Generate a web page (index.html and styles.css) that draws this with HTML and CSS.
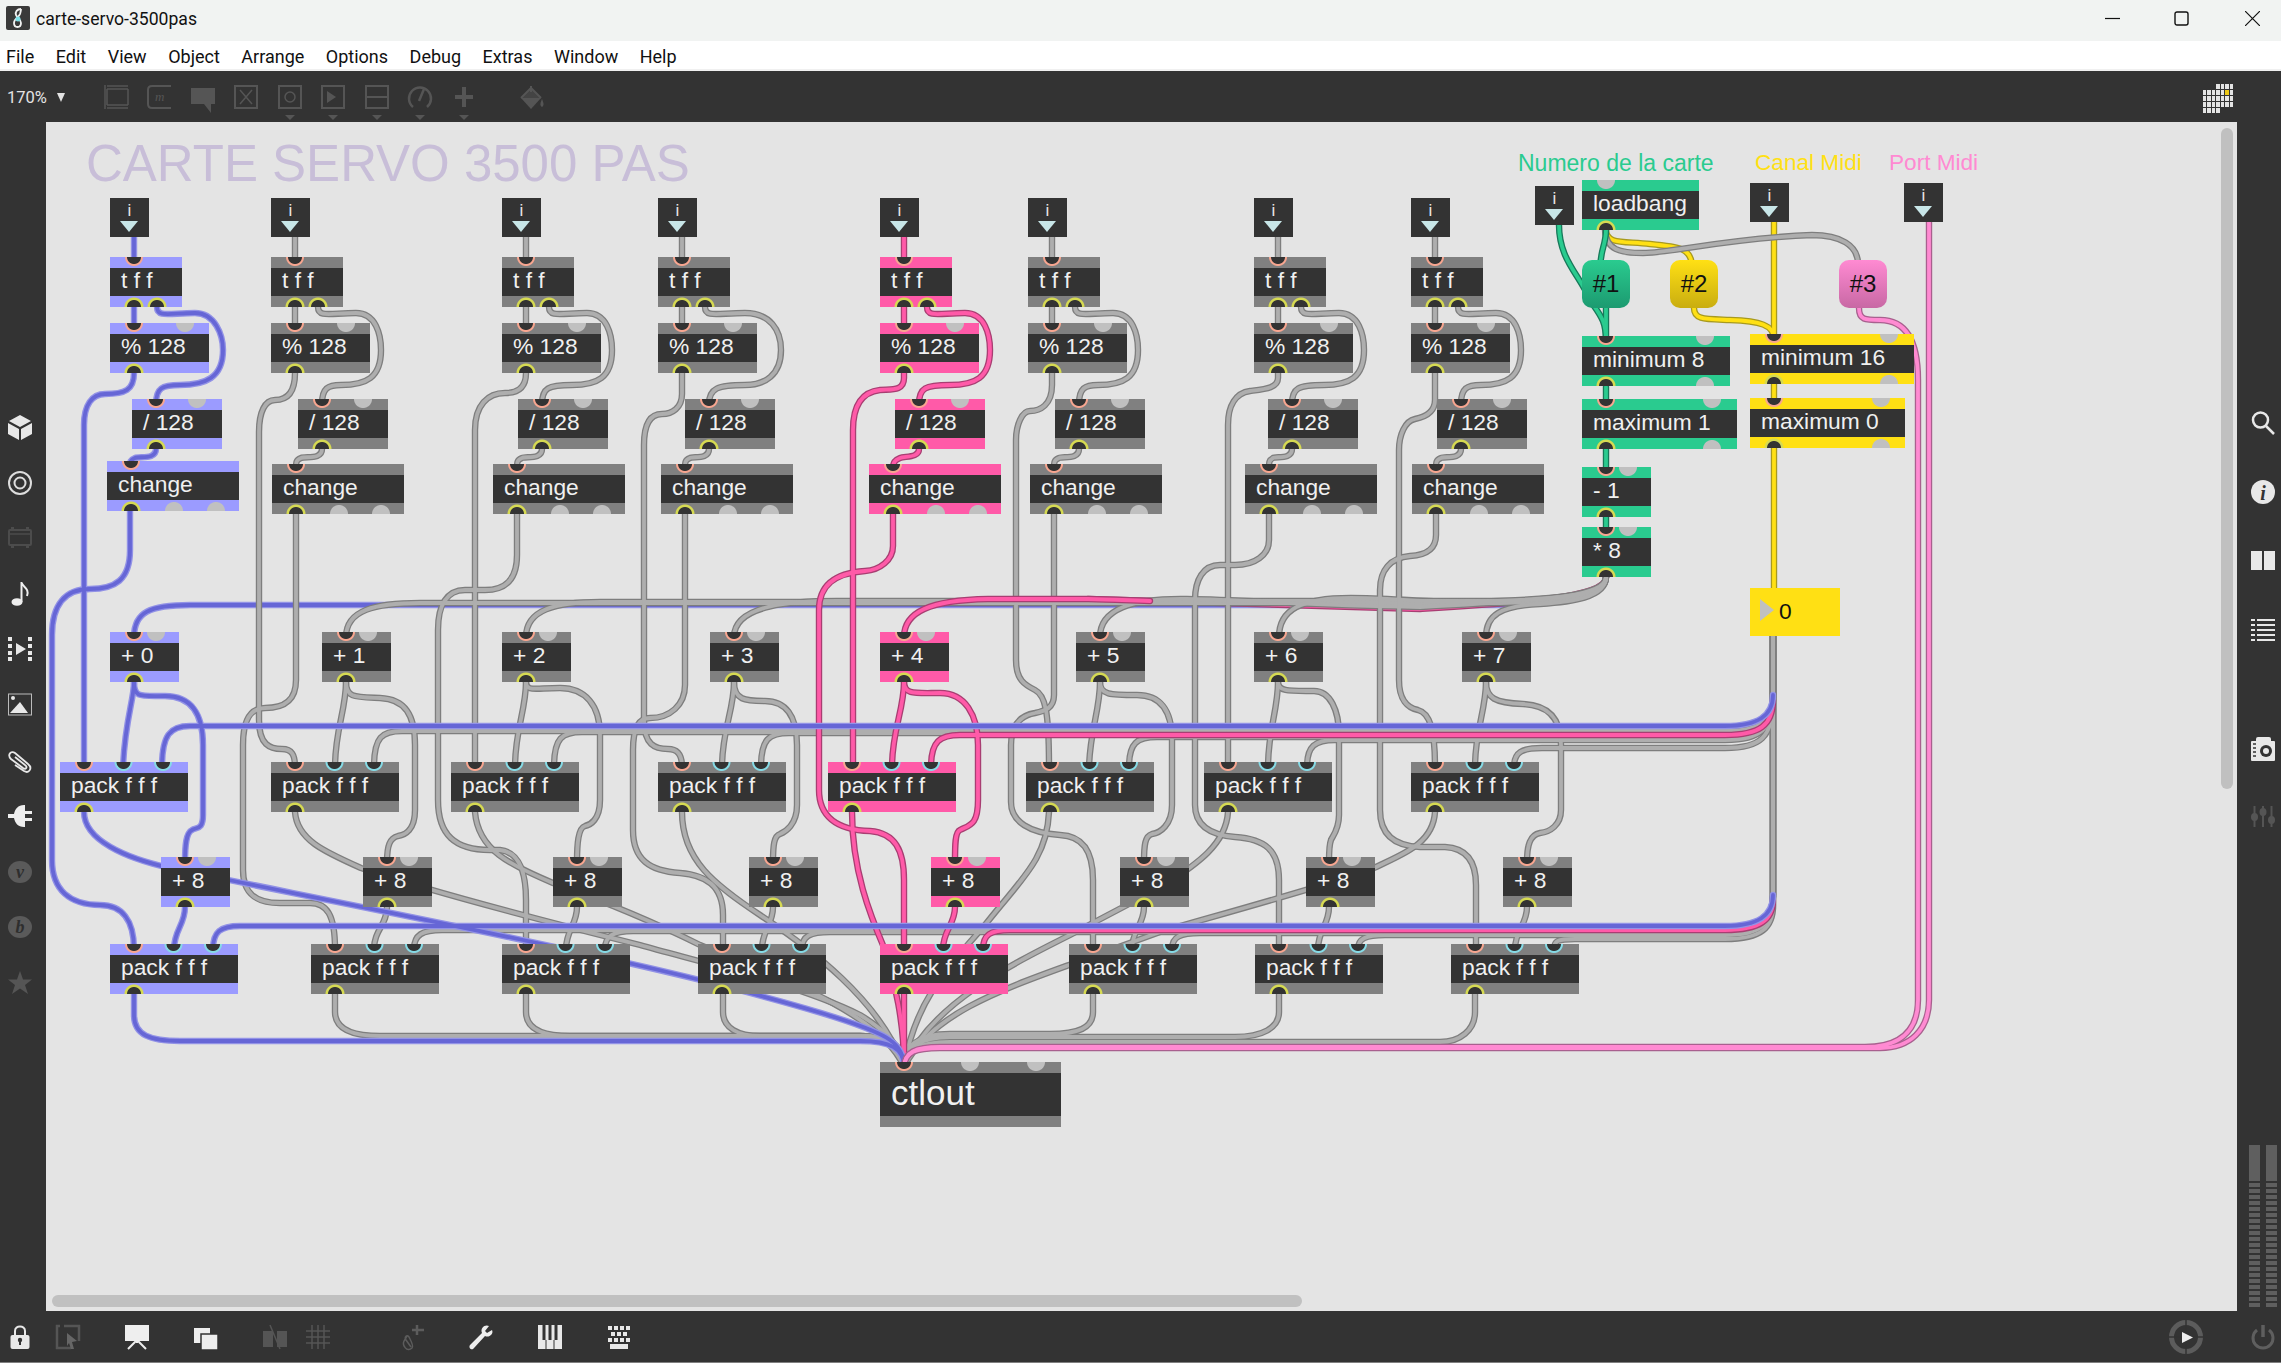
FILE: index.html
```html
<!DOCTYPE html>
<html lang="en">
<head>
<meta charset="utf-8">
<title>carte-servo-3500pas</title>
<link rel="stylesheet" href="styles.css">
</head>
<body>
<header class="titlebar">
  <svg class="appicon" viewBox="0 0 24 24"><rect width="24" height="24" rx="2" fill="#3a3a3a"/><path d="M15 3C11 3 9 6 10 9c1 3 5 4 5 8 0 3-2 4-3.500 4S8 20 8 17c0-4 5-6 6-9 .6-2 1-3 1-5" fill="none" stroke="#f2f2f2" stroke-width="1.800"/><circle cx="12" cy="13" r="2.500" fill="#7fe0e8"/></svg>
  <span class="doc">carte-servo-3500pas</span>
  <div class="winbtns">
    <svg viewBox="0 0 15 15"><path d="M0 7.500H15" stroke="#111" stroke-width="1.200"/></svg>
    <svg viewBox="0 0 15 15"><rect x="1" y="1" width="13" height="13" rx="2" fill="none" stroke="#111" stroke-width="1.400"/></svg>
    <svg viewBox="0 0 15 15"><path d="M0 0L15 15M15 0L0 15" stroke="#111" stroke-width="1.200"/></svg>
  </div>
</header>
<nav class="menubar"><span>File</span><span>Edit</span><span>View</span><span>Object</span><span>Arrange</span><span>Options</span><span>Debug</span><span>Extras</span><span>Window</span><span>Help</span></nav>
<div class="toolbar">
  <span class="zoomval">170%</span><span class="zoomarrow"></span>
  <div class="tools">
    <svg viewBox="0 0 24 34"><path d="M1 0V24M3 1H24M3 4H24M3 20H24M3 23H24M3 4V20M24 4V20" fill="none" stroke="#555" stroke-width="1.500"/></svg>
    <svg viewBox="0 0 24 34"><path d="M24 1H5Q1 1 1 5V19Q1 23 5 23H24" fill="none" stroke="#555" stroke-width="2"/><text x="8" y="16" class="m">m</text></svg>
    <svg viewBox="0 0 24 34"><path d="M0 3H24V19H20L20 28L13 19H0Z" fill="#555"/></svg>
    <svg viewBox="0 0 24 34"><rect x="1" y="1" width="22" height="22" fill="none" stroke="#555" stroke-width="2"/><path d="M6 5L18 19M18 5L6 19" stroke="#555" stroke-width="1.500"/></svg>
    <svg viewBox="0 0 24 34"><rect x="1" y="1" width="22" height="22" fill="none" stroke="#555" stroke-width="2"/><circle cx="12" cy="12" r="5" fill="none" stroke="#555" stroke-width="1.500"/><path d="M7 30H17L12 35Z" fill="#555"/></svg>
    <svg viewBox="0 0 24 34"><rect x="1" y="1" width="22" height="22" fill="none" stroke="#555" stroke-width="2"/><path d="M6 6L15 12L6 18Z" fill="#555"/><path d="M7 30H17L12 35Z" fill="#555"/></svg>
    <svg viewBox="0 0 24 34"><rect x="1" y="1" width="22" height="22" fill="none" stroke="#555" stroke-width="2"/><path d="M1 12H23" stroke="#555" stroke-width="2"/><path d="M7 30H17L12 35Z" fill="#555"/></svg>
    <svg viewBox="0 0 24 34"><path d="M5 22A11 11 0 1 1 19 22" fill="none" stroke="#555" stroke-width="2.500"/><path d="M11 16L16 4" stroke="#555" stroke-width="2.500"/><path d="M7 30H17L12 35Z" fill="#555"/></svg>
    <svg viewBox="0 0 24 34"><path d="M12 2V22M3 12H21" stroke="#555" stroke-width="4"/><path d="M7 30H17L12 35Z" fill="#555"/></svg>
    <svg class="bucket" viewBox="0 0 24 34"><path d="M1 13H21L11 24Z" fill="#555"/><path d="M1 13L11 3L21 13" fill="#444" stroke="#555" stroke-width="2"/><path d="M11 1V7" stroke="#555" stroke-width="2"/><path d="M22 14C23 17 25 20 22 22C19 20 21 17 22 14Z" fill="#555"/></svg>
  </div>
  <svg class="gridmap" viewBox="0 0 30 29">
    <path class="cell" d="M13 0h4v5h-4zM18 0h3v5h-3zM22 0h4v5h-4zM27 0h3v5h-3zM0 6h3v5H0zM4 6h4v5H4zM9 6h3v5H9zM13 6h4v5h-4zM18 6h3v5h-3zM27 6h3v5h-3zM0 12h3v5H0zM4 12h4v5H4zM9 12h3v5H9zM13 12h4v5h-4zM18 12h3v5h-3zM22 12h4v5h-4zM27 12h3v5h-3zM0 18h3v5H0zM4 18h4v5H4zM9 18h3v5H9zM13 18h4v5h-4zM18 18h3v5h-3zM22 18h4v5h-4zM27 18h3v5h-3zM0 24h3v5H0zM4 24h4v5H4zM9 24h3v5H9zM13 24h4v5h-4z"/>
    <path d="M22 6h4v5h-4z" fill="#ecc815"/>
  </svg>
</div>
<main class="workspace">
  <aside class="rail left">
    <svg viewBox="0 0 24 24"><path d="M12 0L23 6L12 12L1 6Z M0 8L11 14V25L0 19Z M24 8L13 14V25L24 19Z" fill="#e8e8e8"/></svg>
    <svg viewBox="0 0 24 24"><circle cx="12" cy="12" r="11" fill="none" stroke="#ddd" stroke-width="2"/><circle cx="12" cy="12" r="5.500" fill="none" stroke="#ddd" stroke-width="2"/></svg>
    <svg viewBox="0 0 24 24"><rect x="1" y="4" width="22" height="15" rx="1" fill="none" stroke="#4c4c4c" stroke-width="2"/><path d="M1 8H23" stroke="#4c4c4c" stroke-width="1.500"/><path d="M3 2H6M18 2H21M3 21H6M18 21H21" stroke="#4c4c4c" stroke-width="2"/></svg>
    <svg viewBox="0 0 24 24"><ellipse cx="9" cy="20" rx="5.500" ry="3.800" fill="#eee"/><path d="M13.500 20V0C14 5 22 6 19 14" fill="none" stroke="#eee" stroke-width="2"/></svg>
    <svg viewBox="0 0 24 24"><path d="M0 0h4v4H0zM0 7h4v4H0zM0 14h4v4H0zM0 20h4v4H0zM20 0h4v4h-4zM20 7h4v4h-4zM20 14h4v4h-4zM20 20h4v4h-4zM8 6L18 12L8 18Z" fill="#e8e8e8"/></svg>
    <svg viewBox="0 0 24 24"><rect x=".5" y="1" width="23" height="21" fill="none" stroke="#bbb"/><circle cx="5" cy="5" r="2" fill="#e8e8e8"/><path d="M2 20L12 9L20 20Z" fill="#e8e8e8"/></svg>
    <svg viewBox="0 0 24 24"><path d="M7 16L16 22C21 25 25 19 20 15L7 4C3 1 -1 6 3 10L15 19C18 21 20 18 17 16L7 8" fill="none" stroke="#e8e8e8" stroke-width="1.800"/></svg>
    <svg viewBox="0 0 24 24"><path d="M0 10H6C7 5 10 1 16 1H17V7H24V10H17V14H24V17H17V23H16C10 23 7 19 6 14H0Z" fill="#eee"/></svg>
    <svg viewBox="0 0 24 24"><ellipse cx="12" cy="12" rx="12" ry="11" fill="#5a5a5a"/><text x="12" y="18" class="badge">v</text></svg>
    <svg viewBox="0 0 24 24"><ellipse cx="12" cy="12" rx="12" ry="11" fill="#5a5a5a"/><text x="12" y="18" class="badge">b</text></svg>
    <svg viewBox="0 0 24 24"><path d="M12 0L15 8.500H24L17 14L20 23L12 17.500L4 23L7 14L0 8.500H9Z" fill="#555"/></svg>
  </aside>
  <section class="canvas">
    <div class="sheet">
      <svg class="cords" viewBox="0 0 2281 1363">
        <defs>
          <g id="c-under">
            <path d="M1606 577C1606 595 1575 600 1500 605H190C150 605 134 612 134 637"/>
          </g>
          <g id="c-pink-under">
            <path d="M1606 577C1606 598 1520 603 1420 609C1300 606 1187 603 1088 599"/>
          </g>
          <g id="c-gray">
            <path d="M1773 636V695C1773 721 1760 731 1725 731H402C382 731 374 737 374 767"/>
            <path d="M1773 636V695C1773 722 1760 732 1725 732H582C562 732 554 738 554 767"/>
            <path d="M1773 636V695C1773 723 1760 733 1725 733H789C769 733 761 739 761 767"/>
            <path d="M1773 636V695C1773 727 1760 737 1725 737H1157C1137 737 1129 743 1129 767"/>
            <path d="M1773 636V695C1773 730 1760 740 1725 740H1335C1315 740 1307 746 1307 767"/>
            <path d="M1773 636V700C1773 738 1760 748 1725 748H1542C1522 748 1514 752 1514 767"/>
            <path d="M1773 636V895C1773 920 1760 930 1725 930H442C422 930 414 935 414 949"/>
            <path d="M1773 636V895C1773 921 1760 931 1725 931H633C613 931 605 936 605 949"/>
            <path d="M1773 636V895C1773 922 1760 932 1725 932H830C810 932 802 936 802 949"/>
            <path d="M1773 636V895C1773 923 1760 933 1725 933H1200C1180 933 1172 937 1172 949"/>
            <path d="M1773 636V895C1773 925 1760 935 1725 935H1385C1365 935 1358 939 1358 949"/>
            <path d="M1773 636V900C1775 929 1760 939 1725 939H1575C1557 939 1554 941 1554 949"/>

            <path d="M1606 577C1606 595 1575 601 1500 603H420C375 603 346 610 346 637"/>
            <path d="M1606 577C1606 595 1575 601 1500 602H600C555 602 526 610 526 637"/>
            <path d="M1606 577C1606 595 1575 601 1500 601H849C790 600 734 605 734 637"/>
            <path d="M1606 577C1606 595 1560 600 1420 607C1300 605 1250 600 1187 599C1130 598 1100 610 1100 637"/>
            <path d="M1606 577C1606 595 1570 600 1449 602C1400 600 1380 598 1351 598C1300 598 1279 610 1279 637"/>
            <path d="M1606 577C1606 598 1570 602 1540 604C1500 606 1486 615 1486 637"/>

            <path d="M295 237V262M295 307V328"/>
            <path d="M318 307C318 318 331 313 356 313C376 313 381 335 381 350C381 378 366 385 341 385C328 385 322 388 322 404"/>
            <path d="M295 373C295 395 285 400 275 400C265 400 259 412 259 432V720C259 745 270 749 282 749C292 749 295 755 295 767"/>
            <path d="M322 449C322 460 306 456 301 458C296 460 296 462 296 469"/>
            <path d="M296 514V680C296 700 285 708 265 708C250 708 243 720 243 745V870C243 893 255 903 280 903H310C327 903 335 915 335 949"/>
            <path d="M346 682C346 710 335 730 335 767"/>
            <path d="M346 682C346 698 355 697 380 698C405 699 415 715 415 745V810C415 830 405 835 398 836C390 838 387 845 387 862"/>
            <path d="M387 907C387 925 374 930 374 949"/>
            <path d="M295 812C297 840 325 852 361 868C420 888 520 915 640 945C700 962 800 985 860 1015C885 1030 900 1045 904 1067"/>
            <path d="M335 994V1012C335 1028 350 1036 380 1036H860C888 1036 904 1045 904 1067"/>

            <path d="M526 237V262M526 307V328"/>
            <path d="M549 307C549 318 562 313 587 313C607 313 612 335 612 350C612 378 597 385 572 385C548 385 542 388 542 404"/>
            <path d="M526 373C526 390 515 393 505 393C488 393 475 405 475 430V767"/>
            <path d="M542 449C542 460 526 456 522 458C517 460 517 462 517 469"/>
            <path d="M517 514V555C517 580 505 590 485 590H465C447 590 438 605 438 630V800C438 835 455 850 490 850H500C520 852 526 875 526 900V949"/>
            <path d="M526 682C526 710 515 730 515 767"/>
            <path d="M526 682C526 692 535 688 560 688C585 688 600 705 600 735V800C600 820 590 825 585 826C578 828 577 845 577 862"/>
            <path d="M577 907C577 925 566 930 566 949"/>
            <path d="M475 812C478 850 510 865 553 883C600 900 660 925 700 945C760 970 880 1010 904 1067"/>
            <path d="M526 994V1012C526 1028 540 1036 570 1036H860C888 1036 904 1045 904 1067"/>

            <path d="M682 237V262M682 307V328"/>
            <path d="M705 307C705 318 718 313 745 313C770 313 781 330 781 350C781 375 765 385 745 385C718 385 709 388 709 404"/>
            <path d="M682 373V394C682 408 672 414 662 414C650 414 644 425 644 445V720C644 745 655 749 668 749C678 749 682 755 682 767"/>
            <path d="M709 449C709 460 693 456 690 458C685 460 685 462 685 469"/>
            <path d="M685 514V685C685 705 670 718 650 718C638 718 633 730 633 750V830C633 860 650 871 680 873C705 875 723 885 723 915V949"/>
            <path d="M734 682C734 710 722 730 722 767"/>
            <path d="M734 682C734 700 745 701 765 701C785 701 797 715 797 745V805C797 825 785 832 780 834C774 836 773 845 773 862"/>
            <path d="M773 907C773 925 762 930 762 949"/>
            <path d="M682 812C682 860 715 885 760 915C810 948 880 1000 904 1067"/>
            <path d="M723 994V1012C723 1028 738 1036 760 1036H860C888 1036 904 1045 904 1067"/>

            <path d="M1052 237V262M1052 307V328"/>
            <path d="M1075 307C1075 318 1088 313 1113 313C1133 313 1138 335 1138 350C1138 378 1123 385 1098 385C1085 385 1079 388 1079 404"/>
            <path d="M1052 373V385C1052 405 1040 411 1030 411C1022 411 1016 425 1016 440V660C1016 680 1025 685 1035 690C1045 695 1049 710 1049 767"/>
            <path d="M1079 449C1079 460 1063 456 1059 458C1054 460 1054 462 1054 469"/>
            <path d="M1054 514V695C1054 708 1045 711 1035 713C1018 716 1011 728 1011 745V802C1011 822 1030 833 1060 835C1082 836 1093 850 1093 880V949"/>
            <path d="M1100 682C1100 710 1090 730 1089 767"/>
            <path d="M1100 682C1100 695 1110 695 1137 695C1160 695 1172 710 1172 740V805C1172 825 1160 833 1152 834C1145 836 1144 845 1144 862"/>
            <path d="M1144 907C1144 925 1132 930 1132 949"/>
            <path d="M1049 812C1047 860 1020 880 985 925C950 965 915 1000 904 1067"/>
            <path d="M1093 994V1012C1093 1028 1078 1034 1050 1034H950C920 1034 904 1045 904 1067"/>

            <path d="M1278 237V262M1278 307V328"/>
            <path d="M1301 307C1301 318 1314 313 1339 313C1359 313 1364 335 1364 350C1364 378 1349 385 1324 385C1298 385 1292 388 1292 404"/>
            <path d="M1278 373V378C1278 388 1265 389 1250 391C1236 393 1228 405 1228 425V767"/>
            <path d="M1292 449C1292 460 1276 456 1273 458C1269 460 1269 462 1269 469"/>
            <path d="M1269 514V540C1269 555 1255 565 1235 565H1220C1203 565 1195 580 1195 600V805C1195 825 1210 835 1235 837C1265 839 1279 850 1279 880V949"/>
            <path d="M1278 682C1278 710 1268 730 1268 767"/>
            <path d="M1278 682C1278 692 1290 691 1314 691C1330 691 1339 710 1339 735V815C1339 830 1332 837 1331 840C1329 845 1329 850 1329 862"/>
            <path d="M1329 907C1329 925 1318 930 1318 949"/>
            <path d="M1228 812C1226 845 1195 865 1165 885L1070 935C1010 965 930 1005 904 1067"/>
            <path d="M1279 994V1012C1279 1028 1262 1037 1235 1037H950C920 1037 904 1048 904 1067"/>

            <path d="M1435 237V262M1435 307V328"/>
            <path d="M1458 307C1458 318 1471 313 1496 313C1516 313 1521 335 1521 350C1521 378 1506 385 1481 385C1467 385 1461 388 1461 404"/>
            <path d="M1435 373V400C1435 412 1425 417 1415 419C1405 421 1399 435 1399 450V680C1399 700 1408 708 1418 710C1430 713 1435 730 1435 767"/>
            <path d="M1461 449C1461 460 1445 456 1441 458C1436 460 1436 462 1436 469"/>
            <path d="M1436 514V535C1436 548 1428 555 1410 556C1390 558 1380 570 1380 590V810C1380 835 1395 846 1420 847H1445C1465 848 1476 860 1476 885V949"/>
            <path d="M1486 682C1486 710 1475 730 1475 767"/>
            <path d="M1486 682C1486 698 1495 703 1523 704C1545 705 1561 715 1561 745V810C1561 825 1550 832 1540 833C1530 835 1527 845 1527 862"/>
            <path d="M1527 907C1527 925 1515 930 1515 949"/>
            <path d="M1435 812C1433 845 1400 855 1374 868C1340 882 1200 920 1160 932L1069 965C1000 990 930 1015 904 1067"/>
            <path d="M1475 994V1012C1475 1030 1460 1042 1440 1042H950C920 1042 904 1050 904 1067"/>

            <path d="M1605 230C1606 250 1620 253 1643 253C1670 253 1730 238 1812 235C1840 235 1858 245 1858 264"/>
          </g>
          <g id="c-blue">
            <path d="M134 237V262M134 307V328"/>
            <path d="M157 307C157 318 170 313 195 313C215 313 223 335 223 350C223 378 205 385 180 385C162 385 156 388 156 404"/>
            <path d="M134 373C134 390 125 394 105 394C92 394 84 405 84 425V767"/>
            <path d="M156 449C156 460 140 456 135 458C130 460 130 462 130 466"/>
            <path d="M130 511V550C130 580 115 589 90 589C65 589 52 605 52 635V860C52 890 70 905 100 905C122 905 134 920 134 949"/>
            <path d="M134 682C134 700 125 720 123 767"/>
            <path d="M134 682C134 698 140 696 165 696C192 696 203 715 203 745V815C203 830 197 827 192 830C186 833 185 845 185 862"/>
            <path d="M84 812C84 840 125 858 170 868C300 895 560 945 700 980C790 1003 870 1025 890 1040C900 1047 904 1055 904 1067"/>
            <path d="M185 907C185 925 174 930 174 949"/>
            <path d="M134 994V1015C134 1035 150 1041 180 1041H860C890 1041 904 1048 904 1067"/>
            <path d="M1773 695C1773 716 1758 726 1725 726H190C170 726 162 735 162 767"/>
            <path d="M1773 895C1773 916 1758 926 1725 926H240C220 926 213 932 213 949"/>
          </g>
          <g id="c-pink">
            <path d="M904 237V262M904 307V328"/>
            <path d="M927 307C927 318 940 313 965 313C985 313 990 335 990 350C990 378 975 385 950 385C925 385 919 388 919 404"/>
            <path d="M904 373V378C904 392 890 389 880 390C862 392 853 405 853 430V767"/>
            <path d="M919 449C919 458 905 456 900 458C895 460 893 462 893 469"/>
            <path d="M893 514V546C893 560 880 570 865 571C835 573 819 585 819 610V790C819 815 835 830 870 831C895 833 904 850 904 880V949"/>
            <path d="M904 682C904 710 892 730 892 767"/>
            <path d="M904 682C904 695 915 693 940 693C965 693 978 715 978 745V800C978 825 970 825 960 830C955 832 955 845 955 862"/>
            <path d="M955 907C955 925 943 930 943 949"/>
            <path d="M852 812C852 870 870 915 885 950C895 985 904 1020 904 1067"/>
            <path d="M904 994V1067"/>
            <path d="M1150 601C1120 600 1100 599 1088 599H988C930 600 904 612 904 637"/>
            <path d="M1773 700C1773 725 1760 735 1725 735H960C940 735 931 741 931 767"/>
            <path d="M1773 900C1773 920 1760 930 1725 930H1010C990 930 983 935 983 949"/>
          </g>
          <g id="c-port">
            <path d="M1859 308C1859 320 1865 320 1880 320C1905 320 1918 340 1918 380V1000C1918 1035 1895 1047 1865 1047H940C915 1047 905 1052 904 1067"/>
            <path d="M1929 222V1000C1929 1030 1910 1048 1880 1048H940C915 1048 905 1052 904 1067"/>
          </g>
          <g id="c-green">
            <path d="M1559 225C1559 260 1580 275 1590 300C1600 315 1606 320 1606 341"/>
            <path d="M1606 230C1606 245 1600 250 1600 270"/>
            <path d="M1606 308V341M1606 387V404M1606 449V472M1606 517V532"/>
          </g>
          <g id="c-yellow">
            <path d="M1774 222V339"/>
            <path d="M1606 230C1606 245 1625 241 1650 244C1680 247 1690 248 1692 264"/>
            <path d="M1694 308C1694 320 1705 319 1730 320C1760 321 1774 325 1774 339"/>
            <path d="M1774 383V403M1774 448V590"/>
          </g>
        </defs>
        <use href="#c-yellow" class="edge e-yellow"/><use href="#c-yellow" class="core k-yellow"/>
        <use href="#c-under" class="edge e-blue"/><use href="#c-under" class="core k-blue"/>
        <use href="#c-pink-under" class="edge e-pink"/><use href="#c-pink-under" class="core k-pink"/>
        <use href="#c-gray" class="edge e-gray"/><use href="#c-gray" class="core k-gray"/>
        <use href="#c-green" class="edge e-green"/><use href="#c-green" class="core k-green"/>
        <use href="#c-pink" class="edge e-pink"/><use href="#c-pink" class="core k-pink"/>
        <use href="#c-blue" class="edge e-blue"/><use href="#c-blue" class="core k-blue"/>
        <use href="#c-port" class="edge e-port"/><use href="#c-port" class="core k-port"/>
      </svg>

      <h1 class="title">CARTE SERVO 3500 PAS</h1>
      <span class="label l-green">Numero de la carte</span>
      <span class="label l-yellow">Canal Midi</span>
      <span class="label l-pink">Port Midi</span>

      <div class="inl" style="left:110px;top:198px">i</div>
      <div class="inl" style="left:271px;top:198px">i</div>
      <div class="inl" style="left:502px;top:198px">i</div>
      <div class="inl" style="left:658px;top:198px">i</div>
      <div class="inl" style="left:880px;top:198px">i</div>
      <div class="inl" style="left:1028px;top:198px">i</div>
      <div class="inl" style="left:1254px;top:198px">i</div>
      <div class="inl" style="left:1411px;top:198px">i</div>
      <div class="inl" style="left:1535px;top:186px">i</div>
      <div class="inl" style="left:1750px;top:183px">i</div>
      <div class="inl" style="left:1904px;top:183px">i</div>

      <div class="obj tff blue" style="left:110px;top:257px">t f f</div>
      <div class="obj tff gray" style="left:271px;top:257px">t f f</div>
      <div class="obj tff gray" style="left:502px;top:257px">t f f</div>
      <div class="obj tff gray" style="left:658px;top:257px">t f f</div>
      <div class="obj tff pink" style="left:880px;top:257px">t f f</div>
      <div class="obj tff gray" style="left:1028px;top:257px">t f f</div>
      <div class="obj tff gray" style="left:1254px;top:257px">t f f</div>
      <div class="obj tff gray" style="left:1411px;top:257px">t f f</div>

      <div class="obj mod blue" style="left:110px;top:323px">% 128</div>
      <div class="obj mod gray" style="left:271px;top:323px">% 128</div>
      <div class="obj mod gray" style="left:502px;top:323px">% 128</div>
      <div class="obj mod gray" style="left:658px;top:323px">% 128</div>
      <div class="obj mod pink" style="left:880px;top:323px">% 128</div>
      <div class="obj mod gray" style="left:1028px;top:323px">% 128</div>
      <div class="obj mod gray" style="left:1254px;top:323px">% 128</div>
      <div class="obj mod gray" style="left:1411px;top:323px">% 128</div>

      <div class="obj dvd blue" style="left:132px;top:399px">/ 128</div>
      <div class="obj dvd gray" style="left:298px;top:399px">/ 128</div>
      <div class="obj dvd gray" style="left:518px;top:399px">/ 128</div>
      <div class="obj dvd gray" style="left:685px;top:399px">/ 128</div>
      <div class="obj dvd pink" style="left:895px;top:399px">/ 128</div>
      <div class="obj dvd gray" style="left:1055px;top:399px">/ 128</div>
      <div class="obj dvd gray" style="left:1268px;top:399px">/ 128</div>
      <div class="obj dvd gray" style="left:1437px;top:399px">/ 128</div>

      <div class="obj chg blue" style="left:107px;top:461px">change</div>
      <div class="obj chg gray" style="left:272px;top:464px">change</div>
      <div class="obj chg gray" style="left:493px;top:464px">change</div>
      <div class="obj chg gray" style="left:661px;top:464px">change</div>
      <div class="obj chg pink" style="left:869px;top:464px">change</div>
      <div class="obj chg gray" style="left:1030px;top:464px">change</div>
      <div class="obj chg gray" style="left:1245px;top:464px">change</div>
      <div class="obj chg gray" style="left:1412px;top:464px">change</div>

      <div class="obj add blue" style="left:110px;top:632px">+ 0</div>
      <div class="obj add gray" style="left:322px;top:632px">+ 1</div>
      <div class="obj add gray" style="left:502px;top:632px">+ 2</div>
      <div class="obj add gray" style="left:710px;top:632px">+ 3</div>
      <div class="obj add pink" style="left:880px;top:632px">+ 4</div>
      <div class="obj add gray" style="left:1076px;top:632px">+ 5</div>
      <div class="obj add gray" style="left:1254px;top:632px">+ 6</div>
      <div class="obj add gray" style="left:1462px;top:632px">+ 7</div>

      <div class="obj pack blue" style="left:60px;top:762px">pack f f f</div>
      <div class="obj pack gray" style="left:271px;top:762px">pack f f f</div>
      <div class="obj pack gray" style="left:451px;top:762px">pack f f f</div>
      <div class="obj pack gray" style="left:658px;top:762px">pack f f f</div>
      <div class="obj pack pink" style="left:828px;top:762px">pack f f f</div>
      <div class="obj pack gray" style="left:1026px;top:762px">pack f f f</div>
      <div class="obj pack gray" style="left:1204px;top:762px">pack f f f</div>
      <div class="obj pack gray" style="left:1411px;top:762px">pack f f f</div>

      <div class="obj add blue" style="left:161px;top:857px">+ 8</div>
      <div class="obj add gray" style="left:363px;top:857px">+ 8</div>
      <div class="obj add gray" style="left:553px;top:857px">+ 8</div>
      <div class="obj add gray" style="left:749px;top:857px">+ 8</div>
      <div class="obj add pink" style="left:931px;top:857px">+ 8</div>
      <div class="obj add gray" style="left:1120px;top:857px">+ 8</div>
      <div class="obj add gray" style="left:1306px;top:857px">+ 8</div>
      <div class="obj add gray" style="left:1503px;top:857px">+ 8</div>

      <div class="obj pack blue" style="left:110px;top:944px">pack f f f</div>
      <div class="obj pack gray" style="left:311px;top:944px">pack f f f</div>
      <div class="obj pack gray" style="left:502px;top:944px">pack f f f</div>
      <div class="obj pack gray" style="left:698px;top:944px">pack f f f</div>
      <div class="obj pack pink" style="left:880px;top:944px">pack f f f</div>
      <div class="obj pack gray" style="left:1069px;top:944px">pack f f f</div>
      <div class="obj pack gray" style="left:1255px;top:944px">pack f f f</div>
      <div class="obj pack gray" style="left:1451px;top:944px">pack f f f</div>

      <div class="obj ctl gray" style="left:880px;top:1062px">ctlout</div>

      <div class="obj lbang green" style="left:1582px;top:180px">loadbang</div>
      <div class="msg m-green" style="left:1582px;top:260px">#1</div>
      <div class="msg m-yellow" style="left:1670px;top:260px">#2</div>
      <div class="msg m-pink" style="left:1839px;top:260px">#3</div>
      <div class="obj min8 green" style="left:1582px;top:336px">minimum 8</div>
      <div class="obj max1 green" style="left:1582px;top:399px">maximum 1</div>
      <div class="obj add green" style="left:1582px;top:467px">- 1</div>
      <div class="obj add green" style="left:1582px;top:527px">* 8</div>
      <div class="obj min16 yellow" style="left:1750px;top:334px">minimum 16</div>
      <div class="obj max0 yellow" style="left:1750px;top:398px">maximum 0</div>
      <div class="num" style="left:1750px;top:588px">0</div>

      <div class="vscroll"></div>
      <div class="hscroll"></div>
    </div>
  </section>
  <aside class="rail right">
    <svg viewBox="0 0 24 24"><circle cx="9.500" cy="9" r="7.500" fill="none" stroke="#e8e8e8" stroke-width="2.500"/><path d="M15 15L23 23" stroke="#e8e8e8" stroke-width="2.500"/></svg>
    <svg viewBox="0 0 24 24"><circle cx="12" cy="12" r="12" fill="#e8e8e8"/><text x="12" y="20" class="info">i</text></svg>
    <svg viewBox="0 0 24 24"><path d="M0 2H11V21H0ZM13 2H24V21H13Z" fill="#e8e8e8"/></svg>
    <svg viewBox="0 0 24 24"><path d="M0 1h4v2H0zM6 1h18v2H6zM0 6h4v2H0zM6 6h18v2H6zM0 11h4v2H0zM6 11h18v2H6zM0 16h4v2H0zM6 16h18v2H6zM0 21h4v2H0zM6 21h18v2H6z" fill="#e8e8e8"/></svg>
    <svg class="cam" viewBox="0 0 24 24"><path d="M1 4H5V2Q5 0 7 0H18Q20 0 20 2V4H23Q24 4 24 5V23Q24 24 23 24H1Q0 24 0 23V5Q0 4 1 4Z" fill="#e8e8e8"/><circle cx="15" cy="14" r="6" fill="#333"/><circle cx="15" cy="14" r="3" fill="#e8e8e8"/><path d="M2 7H5M2 11H5M2 15H5M2 19H5" stroke="#333" stroke-width="1.500"/></svg>
    <svg viewBox="0 0 24 24"><path d="M3.500 0V21M12 0V21M20.500 0V21" stroke="#555" stroke-width="2"/><ellipse cx="3.500" cy="11" rx="3.500" ry="4" fill="#555"/><ellipse cx="12" cy="6" rx="3.500" ry="4" fill="#555"/><ellipse cx="20.500" cy="14" rx="3.500" ry="4" fill="#555"/></svg>
    <div class="meter"><i></i><i></i></div>
  </aside>
</main>
<footer class="bottombar">
  <svg class="b-lock" viewBox="0 0 24 24"><path d="M7 11V6C7 0 17 0 17 6V11" fill="none" stroke="#e8e8e8" stroke-width="2"/><rect x="2.500" y="10" width="19" height="14" rx="2" fill="#e8e8e8"/><circle cx="12" cy="15" r="2.200" fill="#333"/><path d="M11 15H13V20H11Z" fill="#333"/></svg>
  <svg class="b-near" viewBox="0 0 24 24"><path d="M8 1H23V16M15 23H1V1H4" fill="none" stroke="#555" stroke-width="2.500"/><path d="M11 8L21 16L16 17L18 24L15 24L13 18L11 21Z" fill="#666"/></svg>
  <svg viewBox="0 0 24 24"><rect y="0" width="24" height="16" fill="#eee"/><path d="M11 16L3 24M13 16L21 24" stroke="#eee" stroke-width="2"/><path d="M11 16H13V18H11Z" fill="#eee"/></svg>
  <svg viewBox="0 0 24 24"><rect x="0" y="3" width="16" height="15" fill="#eee"/><rect x="7" y="9" width="17" height="16" fill="#eee" stroke="#333" stroke-width="1.500"/></svg>
  <svg viewBox="0 0 24 24"><path d="M0 6H10V22H0ZM14 6H24V22H14Z" fill="#555"/><path d="M7 0L17 24" stroke="#555" stroke-width="1.500"/></svg>
  <svg class="b-tight" viewBox="0 0 24 24"><path d="M6 0V24M12 0V24M18 0V24M0 6H24M0 12H24M0 18H24" stroke="#555" stroke-width="1.500"/></svg>
  <svg class="b-wide" viewBox="0 0 24 24"><path d="M7 9L4 14C2 18 7 26 12 21C14 19 11 14 9 10C7 7 4 10 6 13L11 20" fill="none" stroke="#5c5c5c" stroke-width="1.500" transform="translate(0 2)"/><path d="M17 0V10M12 5H24" stroke="#5c5c5c" stroke-width="2.500"/></svg>
  <svg viewBox="0 0 24 24"><path d="M23 5L18 8L16 6L20 1C16 -1 11 3 13 8L1 20C-1 23 3 26 5 23L16 11C20 13 25 9 23 5Z" fill="#eee"/></svg>
  <svg viewBox="0 0 24 24"><rect width="24" height="24" fill="#e8e8e8"/><path d="M6 0V15M12 0V15M18 0V15" stroke="#333" stroke-width="3"/><path d="M8 15V24M16 15V24" stroke="#333" stroke-width="1"/></svg>
  <svg viewBox="0 0 24 24"><path d="M1 1h4v4H1zM7 1h4v4H7zM13 1h4v4h-4zM19 1h4v4h-4zM4 7h4v4H4zM10 7h4v4h-4zM16 7h4v4h-4zM1 13h4v4H1zM7 13h4v4H7zM13 13h4v4h-4zM19 13h4v4h-4zM3 19H21V24H3Z" fill="#e8e8e8"/></svg>
  <div class="transport">
    <svg class="play" viewBox="0 0 34 34"><circle cx="17" cy="17" r="14.500" fill="none" stroke="#5c5c5c" stroke-width="5"/><path d="M17 0V34M0 17H34" stroke="#333" stroke-width="1.500"/><path d="M13 12L24 17.500L13 23Z" fill="#eee"/></svg>
    <svg viewBox="0 0 24 24"><path d="M6 5A10 10 0 1 0 18 5" fill="none" stroke="#5f5f5f" stroke-width="3"/><path d="M12 0V12" stroke="#5f5f5f" stroke-width="3.500"/></svg>
  </div>
</footer>
</body>
</html>
```

FILE: styles.css
```css
* { box-sizing: border-box; }
html, body { margin: 0; height: 100%; }
body { display: flex; flex-direction: column; width: 2281px; height: 1363px; overflow: hidden; background: #333; font-family: "Liberation Sans", Arial, sans-serif; }

.titlebar { flex: 0 0 41px; display: flex; align-items: flex-start; background: #f1f3f2; padding: 6px 0 0 6px; }
.appicon { width: 24px; height: 24px; }
.doc { margin-left: 6px; font: 17.6px/26px Roboto, sans-serif; color: #111; }
.winbtns { margin-left: auto; display: flex; gap: 54px; padding: 5px 21px 0 0; }
.winbtns svg { width: 15px; height: 15px; }
.winbtns svg:last-child { margin-left: 2px; }

.menubar { flex: 0 0 30px; display: flex; gap: 21.5px; padding: 2px 0 0 6px; align-items: center; background: #fff; border-bottom: 2px solid #f0f0f0; font: 18px Roboto, sans-serif; color: #111; }

.toolbar { flex: 0 0 51px; display: flex; align-items: flex-start; background: #333; padding: 13px 0 0 7px; }
.zoomval { font: 16.5px/28px Roboto, sans-serif; color: #e4e4e4; }
.zoomarrow { width: 0; height: 0; margin: 9px 0 0 10px; border: 4px solid transparent; border-top: 9px solid #e4e4e4; border-bottom: 0; }
.tools { display: flex; gap: 19.5px; margin-left: 39px; }
.tools svg { width: 24px; height: 36px; overflow: visible; }
.tools .bucket { margin-left: 25px; }
.m { font: italic 13px "Liberation Serif", serif; fill: #555; }
.gridmap { margin-left: auto; margin-right: 48px; width: 30px; height: 29px; }
.cell { fill: #e4e4e4; }

.workspace { flex: 0 0 1189px; display: flex; }
.rail { flex: none; display: flex; flex-direction: column; background: #333; }
.rail svg { flex: none; width: 24px; height: 24px; overflow: visible; }
.rail.left { width: 46px; padding: 293px 0 0 8px; gap: 31.6px; }
.rail.right { width: 44px; padding: 289px 0 4px 14px; gap: 45px; }
.rail.right .cam { margin-top: 50px; }
.badge { font: italic bold 18px "Liberation Serif", serif; fill: #2e2e2e; text-anchor: middle; }
.info { font: italic bold 20px "Liberation Serif", serif; fill: #333; text-anchor: middle; }
.meter { margin: auto 0 0 -2px; display: flex; gap: 6px; height: 162px; }
.meter i { width: 11px; background: linear-gradient(#5f5f5f, #5f5f5f) 0 0 / 100% 36px no-repeat, repeating-linear-gradient(#333 0 2px, #5f5f5f 2px 6px); }

.canvas { flex: 1; position: relative; overflow: hidden; background: #e4e4e4; }
.sheet { position: absolute; left: -46px; top: -122px; width: 2281px; height: 1363px; }
.cords { position: absolute; left: 0; top: 0; width: 2281px; height: 1363px; fill: none; stroke-linecap: round; stroke-linejoin: round; }
.edge { stroke-width: 6.4px; }
.core { stroke-width: 3.8px; }
.e-gray { stroke: #7e7e7e; } .k-gray { stroke: #aeaeae; }
.e-blue { stroke: #9292e6; } .k-blue { stroke: #6666d6; }
.e-pink { stroke: #a83e72; } .k-pink { stroke: #ff5aa8; }
.e-port { stroke: #a8608e; } .k-port { stroke: #ff8ad2; }
.e-green { stroke: #17795a; } .k-green { stroke: #2acb8f; }
.e-yellow { stroke: #a89a1e; } .k-yellow { stroke: #ffe014; }

.title { position: absolute; left: 86px; top: 135px; margin: 0; font: 400 51px/58px "Liberation Sans", Arial, sans-serif; color: #c8bed8; white-space: nowrap; }
.label { position: absolute; top: 150px; font-size: 22.6px; line-height: 26px; white-space: nowrap; }
.l-green { left: 1518px; font-size: 23px; color: #2acb8f; }
.l-yellow { left: 1755px; color: #ffe014; }
.l-pink { left: 1889px; color: #ff8ad2; }

.inl { position: absolute; width: 39px; height: 39px; background: #333; color: #e8e8e8; font-size: 17px; line-height: 25px; text-align: center; }
.inl::after { content: ""; position: absolute; left: 10px; top: 23px; border: 9.5px solid transparent; border-top: 11px solid #c8e6e8; border-bottom: 0; }

.obj {
  --r: #333 6.5px, #f8a690 7.5px, #f8a690 8.5px, transparent 9.5px;
  --c: #333 6.5px, #86dbe6 7.5px, #86dbe6 8.5px, transparent 9.5px;
  --y: #333 6.5px, #d6da52 7.5px, #d6da52 9px, transparent 10px;
  --g: #c0c0c0 8.5px, transparent 9.5px;
  --face: linear-gradient(var(--band) 11px, #333 11px, #333 39px, var(--band) 39px);
  position: absolute; height: 50px; padding-left: 11px; color: #f0f0f0; font-size: 22.8px; line-height: 47px; white-space: nowrap;
}
.gray { --band: #808080; }
.blue { --band: #9b9bff; }
.pink { --band: #ff5aa8; }
.green { --band: #2acb8f; }
.yellow { --band: #ffe014; }

.tff { width: 72px; background: radial-gradient(circle at 24px 0, var(--r)), radial-gradient(circle at 24px 50px, var(--y)), radial-gradient(circle at 47px 50px, var(--y)), var(--face); }
.mod { width: 99px; background: radial-gradient(circle at 24px 0, var(--r)), radial-gradient(circle at 75px 0, var(--g)), radial-gradient(circle at 24px 50px, var(--y)), var(--face); }
.dvd { width: 90px; background: radial-gradient(circle at 24px 0, var(--r)), radial-gradient(circle at 65px 0, var(--g)), radial-gradient(circle at 24px 50px, var(--y)), var(--face); }
.chg { width: 132px; background: radial-gradient(circle at 24px 0, var(--r)), radial-gradient(circle at 24px 50px, var(--y)), radial-gradient(circle at 67px 50px, var(--g)), radial-gradient(circle at 109px 50px, var(--g)), var(--face); }
.add { width: 69px; background: radial-gradient(circle at 24px 0, var(--r)), radial-gradient(circle at 46px 0, var(--g)), radial-gradient(circle at 24px 50px, var(--y)), var(--face); }
.pack { width: 128px; background: radial-gradient(circle at 24px 0, var(--r)), radial-gradient(circle at 63.5px 0, var(--c)), radial-gradient(circle at 103px 0, var(--c)), radial-gradient(circle at 24px 50px, var(--y)), var(--face); }
.ctl { width: 181px; height: 65px; font-size: 35px; line-height: 62px; background: radial-gradient(circle at 24px 0, var(--r)), radial-gradient(circle at 90px 0, var(--g)), radial-gradient(circle at 156px 0, var(--g)), linear-gradient(var(--band) 11px, #333 11px, #333 54px, var(--band) 54px); }
.lbang { width: 117px; background: radial-gradient(circle at 24px 0, var(--g)), radial-gradient(circle at 24px 50px, var(--y)), var(--face); }
.min8 { width: 148px; background: radial-gradient(circle at 24px 0, var(--r)), radial-gradient(circle at 123px 0, var(--g)), radial-gradient(circle at 24px 50px, var(--y)), radial-gradient(circle at 123px 50px, var(--g)), var(--face); }
.max1 { width: 155px; background: radial-gradient(circle at 24px 0, var(--r)), radial-gradient(circle at 130px 0, var(--g)), radial-gradient(circle at 24px 50px, var(--y)), radial-gradient(circle at 130px 50px, var(--g)), var(--face); }
.min16 { width: 164px; background: radial-gradient(circle at 24px 0, var(--r)), radial-gradient(circle at 139px 0, var(--g)), radial-gradient(circle at 24px 50px, var(--y)), radial-gradient(circle at 139px 50px, var(--g)), var(--face); }
.max0 { width: 155px; background: radial-gradient(circle at 24px 0, var(--r)), radial-gradient(circle at 131px 0, var(--g)), radial-gradient(circle at 24px 50px, var(--y)), radial-gradient(circle at 131px 50px, var(--g)), var(--face); }

.msg { position: absolute; width: 48px; height: 48px; border-radius: 10px; color: #111; font-size: 24px; line-height: 47px; text-align: center; }
.m-green { background: linear-gradient(#2acb8f, #1c9a70); }
.m-yellow { background: linear-gradient(#ffe014, #c9ad10); }
.m-pink { background: linear-gradient(#ff8ad2, #c868a4); }
.num { position: absolute; width: 90px; height: 48px; padding-left: 29px; background: #ffe014; color: #111; font-size: 22.8px; line-height: 47px; }
.num::before { content: ""; position: absolute; left: 10px; top: 11px; border: 11px solid transparent; border-left: 14px solid #c0c0c0; border-right: 0; }

.vscroll { position: absolute; left: 2221px; top: 128px; width: 12px; height: 661px; border-radius: 6px; background: #c0c0c0; }
.hscroll { position: absolute; left: 52px; top: 1295px; width: 1250px; height: 12px; border-radius: 6px; background: #c0c0c0; }

.bottombar { flex: 0 0 52px; display: flex; gap: 45px; padding: 14px 0 0 8px; background: #333; border-bottom: 1px solid #808080; }
.bottombar > svg { flex: none; width: 24px; height: 24px; overflow: visible; }
.bottombar .b-near { margin-left: -21px; }
.bottombar .b-tight { margin-left: -26px; }
.bottombar .b-wide { margin-left: 25px; }
.transport { margin-left: auto; display: flex; gap: 48px; align-items: center; height: 24px; padding-right: 6px; }
.transport svg { flex: none; width: 24px; height: 24px; overflow: visible; }
.transport .play { width: 34px; height: 34px; }
```
